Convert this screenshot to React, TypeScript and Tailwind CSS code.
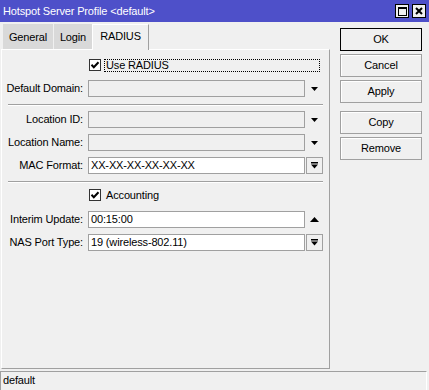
import React from "react";

const Tri = () => (
  <svg width="7" height="4" viewBox="0 0 7 4" className="block">
    <path d="M0 0h7L3.5 4z" fill="#000" />
  </svg>
);

const TriUp = () => (
  <svg width="9" height="5" viewBox="0 0 9 5" className="block">
    <path d="M4.5 0L9 5H0z" fill="#000" />
  </svg>
);

const BarDown = () => (
  <svg width="7" height="7" viewBox="0 0 7 7" className="block">
    <rect x="0" y="0" width="7" height="1.5" fill="#000" />
    <path d="M0 2.5h7L3.5 6.5z" fill="#000" />
  </svg>
);

const Check = () => (
  <svg width="12" height="12" viewBox="0 0 12 12" className="block shrink-0">
    <rect x="0.5" y="0.5" width="11" height="11" fill="#fff" stroke="#333" />
    <path d="M2.5 5.8L4.8 8.2L9.5 3.3" fill="none" stroke="#000" strokeWidth="2" />
  </svg>
);

type Trail = "tri" | "up" | "btn" | "none";

function Field({ label, value, white, trail }: { label: string; value?: string; white?: boolean; trail: Trail }) {
  return (
    <div className="flex items-center h-[17px]">
      <div className="w-[82px] text-right pr-[1px] leading-none">{label}</div>
      <div
        className={
          "ml-[4px] w-[217px] h-[17px] border border-[#a0a0a0] flex items-center pl-[2px] leading-none " +
          (white ? "bg-white" : "bg-[#f0f0f0]")
        }
      >
        {value}
      </div>
      {trail === "btn" ? (
        <div className="ml-[1px] w-[17px] h-[17px] border border-[#a0a0a0] flex items-center justify-center">
          <BarDown />
        </div>
      ) : (
        <div className="ml-[1px] w-[17px] h-[17px] flex items-center justify-center">
          {trail === "tri" && <Tri />}
          {trail === "up" && <TriUp />}
        </div>
      )}
    </div>
  );
}

const Sep = () => (
  <div className="ml-[6px] w-[315px] h-[2px] border-t border-[#a0a0a0] border-b border-b-white" />
);

function Btn({ label, def }: { label: string; def?: boolean }) {
  return (
    <div
      className={
        "w-[82px] h-[23px] flex items-center justify-center border leading-none " +
        (def ? "border-black" : "border-[#a0a0a0] shadow-[inset_1px_1px_0_#fff]")
      }
    >
      {label}
    </div>
  );
}

export default function App() {
  return (
    <div className="w-[429px] h-[390px] overflow-hidden bg-[#f0f0f0] text-black text-[11px] tracking-[-0.15px] font-['Liberation_Sans',Arial,sans-serif] flex flex-col">
      {/* Title bar */}
      <div className="h-[22px] bg-[#4e50c9] flex items-center pl-[3px] shrink-0">
        <div className="text-white leading-none flex-1">Hotspot Server Profile &lt;default&gt;</div>
        <div className="flex gap-[3px] mr-[3px]">
          <div className="w-[14px] h-[14px] border border-black bg-[#f0f0f0] flex items-center justify-center">
            <svg width="9" height="9" viewBox="0 0 9 9" className="block">
              <rect x="0.5" y="0.5" width="8" height="8" fill="none" stroke="#000" />
              <rect x="0" y="0" width="9" height="2" fill="#000" />
            </svg>
          </div>
          <div className="w-[14px] h-[14px] border border-black bg-[#f0f0f0] flex items-center justify-center">
            <svg width="8" height="8" viewBox="0 0 8 8" className="block">
              <path d="M1 1L7 7M7 1L1 7" stroke="#000" strokeWidth="2" />
            </svg>
          </div>
        </div>
      </div>

      {/* Body */}
      <div className="flex h-[349px] shrink-0">
        <div className="w-[331px] flex flex-col">
          {/* Tabs */}
          <div className="flex items-end h-[27px] pl-[3px] pt-[1px]">
            <div className="w-[50px] h-[25px] bg-[#d9d9d9] flex items-center justify-center pt-[1px] leading-none">General</div>
            <div className="ml-[1px] w-[38px] h-[25px] bg-[#d9d9d9] flex items-center justify-center pt-[1px] leading-none">Login</div>
            <div className="w-[57px] h-[26px] bg-[#f0f0f0] border-t border-l border-white border-r border-r-[#a0a0a0] flex items-center justify-center pb-[3px] leading-none relative -mb-[1px]">
              RADIUS
            </div>
          </div>
          {/* Panel */}
          <div className="ml-[1px] w-[329px] h-[320px] border-t border-l border-white border-r border-b border-r-[#a0a0a0] border-b-[#a0a0a0] flex flex-col">
            <div className="mt-[9px] flex items-center h-[12px]">
              <div className="ml-[87px]">
                <Check />
              </div>
              <div className="ml-[3px] w-[216px] h-[13px] border border-dotted border-black flex items-center pl-[1px] leading-none">
                Use RADIUS
              </div>
            </div>
            <div className="mt-[9px]">
              <Field label="Default Domain:" trail="tri" />
            </div>
            <div className="mt-[7px]">
              <Sep />
            </div>
            <div className="mt-[5px]">
              <Field label="Location ID:" trail="tri" />
            </div>
            <div className="mt-[6px]">
              <Field label="Location Name:" trail="tri" />
            </div>
            <div className="mt-[6px]">
              <Field label="MAC Format:" value="XX-XX-XX-XX-XX-XX" white trail="btn" />
            </div>
            <div className="mt-[7px]">
              <Sep />
            </div>
            <div className="mt-[6px] flex items-center h-[12px]">
              <div className="ml-[87px]">
                <Check />
              </div>
              <div className="ml-[5px] leading-none">Accounting</div>
            </div>
            <div className="mt-[10px]">
              <Field label="Interim Update:" value="00:15:00" white trail="up" />
            </div>
            <div className="mt-[6px]">
              <Field label="NAS Port Type:" value="19 (wireless-802.11)" white trail="btn" />
            </div>
          </div>
        </div>
        {/* Buttons */}
        <div className="ml-[9px] mt-[6px] flex flex-col">
          <div className="flex flex-col gap-[3px]">
            <Btn label="OK" def />
            <Btn label="Cancel" />
            <Btn label="Apply" />
          </div>
          <div className="mt-[8px] flex flex-col gap-[3px]">
            <Btn label="Copy" />
            <Btn label="Remove" />
          </div>
        </div>
      </div>

      {/* Status bar */}
      <div className="w-[427px] h-[19px] border-t border-l border-[#a0a0a0] border-r border-r-white flex items-center pl-[2px] pb-[1px] leading-none shrink-0">
        default
      </div>
    </div>
  );
}
